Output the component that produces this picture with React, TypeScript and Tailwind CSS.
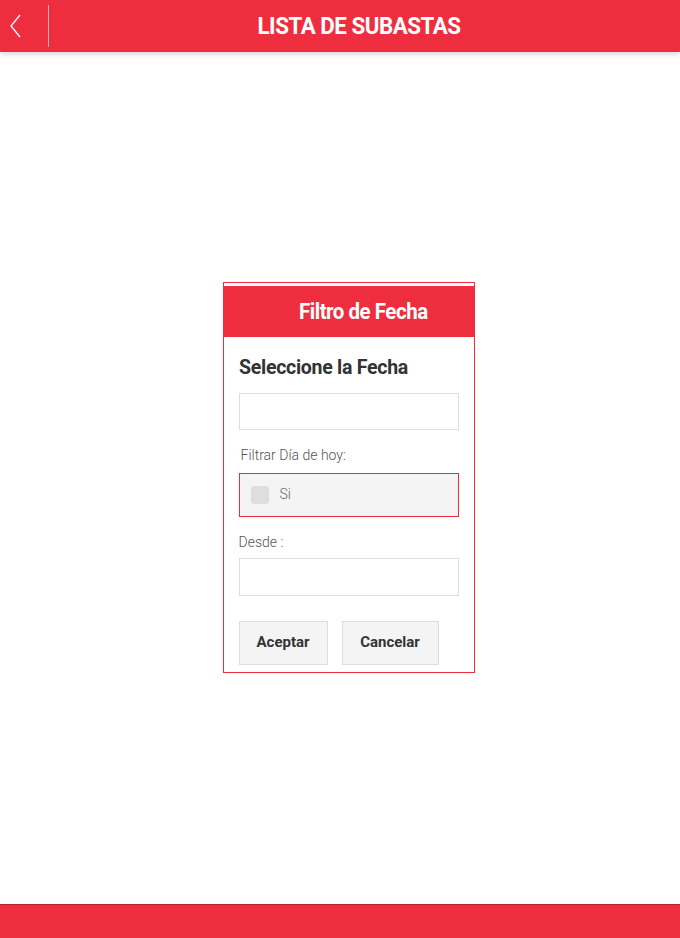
export default function App() {
  const cond = { fontFamily: "Roboto, 'Liberation Sans', sans-serif" };
  return (
    <div className="h-screen w-full flex flex-col bg-white" style={cond}>
      <header className="h-[52px] bg-[#ee2e3e] flex items-center relative shadow-[0_2px_6px_rgba(0,0,0,0.18)] z-10">
        <div className="w-[50px] h-full flex items-center relative">
          <svg width="14" height="26" viewBox="0 0 14 26" className="ml-[8px]">
            <path d="M12 2 L3 13 L12 24" fill="none" stroke="#fff" strokeWidth="1.3" />
          </svg>
          <div className="absolute right-[1px] top-[5px] bottom-[5px] w-px bg-[#f7a9b0]" />
        </div>
        <h1 className="absolute left-0 right-0 pl-[41px] text-center text-white font-bold text-[24px] tracking-[-0.5px] scale-x-[0.93] pointer-events-none">
          LISTA DE SUBASTAS
        </h1>
      </header>

      <main className="flex-1 flex items-center justify-center pl-[17px] pb-[2px]">
        <div className="w-[252px] border border-[#ee2e3e] pt-[3px] pb-[7px] bg-white">
          <div className="h-[51px] bg-[#ee2e3e] flex items-center pl-[75px]">
            <span className="text-white font-bold text-[22px] tracking-[-0.5px] origin-left scale-x-[0.93] whitespace-nowrap">
              Filtro de Fecha
            </span>
          </div>
          <div className="px-[15px]">
            <h2 className="mt-[17px] text-[#333] font-bold text-[21px] tracking-[-0.3px] origin-left scale-x-[0.93] whitespace-nowrap leading-[26px]">
              Seleccione la Fecha
            </h2>
            <input className="mt-[13px] block w-[220px] h-[37px] border border-[#dddddd] outline-none" />
            <div className="mt-[16px] ml-[2px] text-[14px] font-light text-[#555] leading-[18px]">
              Filtrar Día de hoy:
            </div>
            <label className="mt-[9px] flex items-center w-[220px] h-[44px] border border-[#ee2e3e] bg-[#f4f4f4] pl-[11px]">
              <span className="w-[18px] h-[18px] rounded-[3px] bg-[#dedede]" />
              <span className="ml-[11px] text-[14px] font-light text-[#666]">Si</span>
            </label>
            <div className="mt-[16px] text-[14px] font-light text-[#555] leading-[18px]">Desde :</div>
            <input className="mt-[7px] block w-[220px] h-[38px] border border-[#dddddd] outline-none" />
            <div className="mt-[25px] flex gap-[14px]">
              <button className="w-[89px] h-[44px] bg-[#f4f4f4] border border-[#dddddd] text-[15px] font-bold text-[#333]">
                Aceptar
              </button>
              <button className="w-[97px] h-[44px] bg-[#f4f4f4] border border-[#dddddd] text-[15px] font-bold text-[#333]">
                Cancelar
              </button>
            </div>
          </div>
        </div>
      </main>

      <footer className="h-[34px] bg-[#ee2e3e] border-t border-[#b32633]" />
    </div>
  );
}
